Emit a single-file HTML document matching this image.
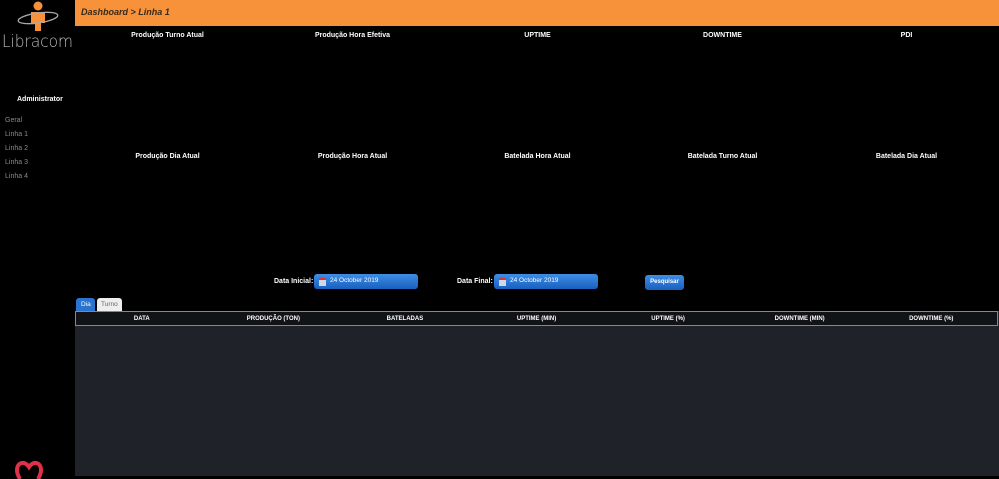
<!DOCTYPE html>
<html><head><style>
*{margin:0;padding:0;box-sizing:border-box}
body{width:999px;height:476px;background:#000;font-family:"Liberation Sans",sans-serif;position:relative;overflow:hidden;color:#fff}
.hdr{position:absolute;left:75px;top:0;width:924px;height:26px;background:#f7923a;font:italic bold 9px "Liberation Sans";color:#3a2a1a;padding:7px 0 0 6px}
.t{position:absolute;width:185px;text-align:center;font-size:7px;font-weight:bold}
.menu{position:absolute;left:5px;font-size:7px;color:#8a8a8a}
.lbl{position:absolute;font-size:7px;font-weight:bold}
.dp{position:absolute;height:15px;border-radius:3px;background:linear-gradient(#3d8ee6,#1a5fbf);font-size:6.5px;color:#fff;padding:3px 0 0 16px}
.dp.ic:before{content:"";position:absolute;left:5px;top:4px;width:7px;height:6px;background:#cfd8ea;border-top:2px solid #d33}
.tbl{position:absolute;left:75px;top:311px;width:924px;height:165px;background:#1f2229}
.th{position:absolute;left:75px;top:311px;width:923px;height:15px;background:#121316;border:1px solid #888;display:flex;font-size:6px;font-weight:bold;align-items:center}
.th div{flex:1;text-align:center}
</style></head><body>
<svg style="position:absolute;left:0;top:0" width="75" height="52" viewBox="0 0 75 52">
<circle cx="38" cy="6" r="4.5" fill="#f7923a"/>
<path d="M31 12h14v11h-4v8h-6v-8h-4z" fill="#f7923a"/>
<ellipse cx="38" cy="18" rx="20" ry="5" fill="none" stroke="#aaa" stroke-width="1.3" transform="rotate(-8 38 18)"/>
<text x="2" y="47" font-family="DejaVu Sans" font-size="17" font-weight="200" fill="#bbb" textLength="71" lengthAdjust="spacingAndGlyphs">Libracom</text>
</svg>
<div style="position:absolute;left:17px;top:96px;font-size:7px;font-weight:bold">Administrator</div>
<div class="menu" style="top:117px">Geral</div>
<div class="menu" style="top:131px">Linha 1</div>
<div class="menu" style="top:145px">Linha 2</div>
<div class="menu" style="top:159px">Linha 3</div>
<div class="menu" style="top:173px">Linha 4</div>
<svg style="position:absolute;left:12px;top:459px" width="34" height="20" viewBox="0 0 34 20"><path d="M8 20C2 10 6 3 12 4C15 5 17 8 17 8C17 8 19 5 22 4C28 3 32 10 26 20" fill="none" stroke="#e0304a" stroke-width="4"/></svg>
<div class="hdr">Dashboard &gt; Linha 1</div>
<div class="t" style="left:75px;top:32px">Produção Turno Atual</div>
<div class="t" style="left:260px;top:32px">Produção Hora Efetiva</div>
<div class="t" style="left:445px;top:32px">UPTIME</div>
<div class="t" style="left:630px;top:32px">DOWNTIME</div>
<div class="t" style="left:814px;top:32px">PDI</div>
<div class="t" style="left:75px;top:153px">Produção Dia Atual</div>
<div class="t" style="left:260px;top:153px">Produção Hora Atual</div>
<div class="t" style="left:445px;top:153px">Batelada Hora Atual</div>
<div class="t" style="left:630px;top:153px">Batelada Turno Atual</div>
<div class="t" style="left:814px;top:153px">Batelada Dia Atual</div>
<div class="lbl" style="left:274px;top:278px">Data Inicial:</div>
<div class="dp ic" style="left:314px;top:274px;width:104px">24 October 2019</div>
<div class="lbl" style="left:457px;top:278px">Data Final:</div>
<div class="dp ic" style="left:494px;top:274px;width:104px">24 October 2019</div>
<div class="dp" style="left:645px;top:275px;width:39px;height:15px;padding:4px 0 0 0;text-align:center;font-weight:bold;font-size:6px">Pesquisar</div>
<div style="position:absolute;left:76px;top:298px;width:19px;height:13px;background:#2a74d0;border-radius:3px 3px 0 0;font-size:6.5px;padding:3px 0 0 5px">Dia</div>
<div style="position:absolute;left:97px;top:298px;width:25px;height:13px;background:#eee;border-radius:3px 3px 0 0;font-size:6.5px;color:#666;padding:3px 0 0 4px">Turno</div>
<div class="tbl"></div>
<div class="th"><div>DATA</div><div>PRODUÇÃO (TON)</div><div>BATELADAS</div><div>UPTIME (MIN)</div><div>UPTIME (%)</div><div>DOWNTIME (MIN)</div><div>DOWNTIME (%)</div></div>
</body></html>
